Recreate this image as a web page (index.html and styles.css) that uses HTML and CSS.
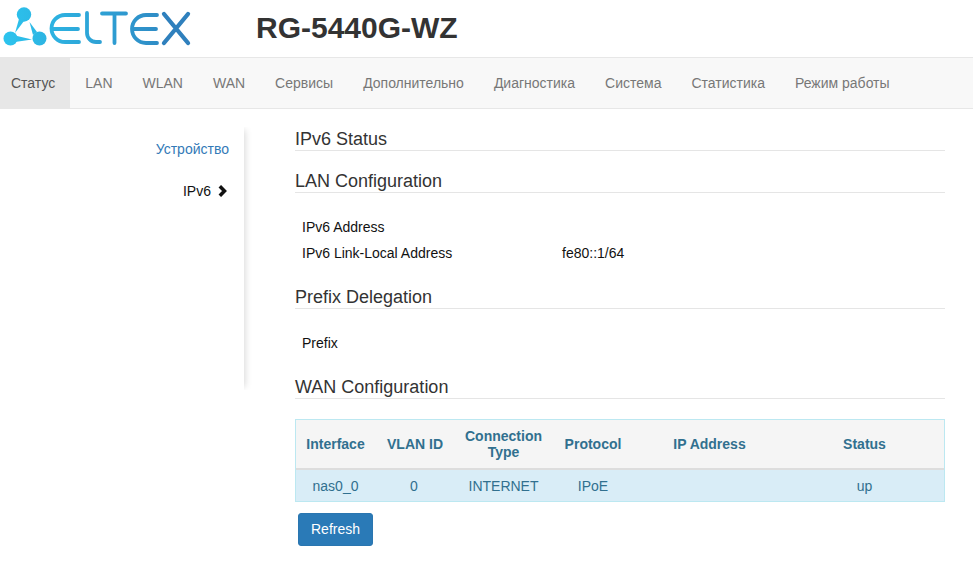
FILE: index.html
```
<!DOCTYPE html>
<html lang="ru">
<head>
<meta charset="utf-8">
<title>RG-5440G-WZ</title>
<link rel="stylesheet" href="styles.css">
</head>
<body>
<header class="top">
  <svg class="logo" width="192" height="57" viewBox="0 0 192 57" aria-label="ELTEX">
    <defs>
      <linearGradient id="g" gradientUnits="userSpaceOnUse" x1="3" y1="0" x2="192" y2="0">
        <stop offset="0" stop-color="#2cc4ee"/>
        <stop offset="1" stop-color="#2f80bd"/>
      </linearGradient>
    </defs>
    <g fill="url(#g)">
      <circle cx="24" cy="14.500" r="7.200"/>
      <circle cx="10.500" cy="38.500" r="7"/>
      <circle cx="39.500" cy="38.500" r="7"/>
      <path d="M19 19 L24 21 L15 33 Z"/>
      <path d="M29.500 22 L37 32 L33 35 Z"/>
      <path d="M15 35.500 L15 42 L32 39.500 Z"/>
    </g>
    <g fill="none" stroke="url(#g)" stroke-width="3.800" stroke-linecap="round" stroke-linejoin="round">
      <path d="M79 15 H65 A13.500 13.500 0 0 0 65 42 H79 M52 29 H78"/>
      <path d="M87 13 V33 A9 9 0 0 0 96 42 H100"/>
      <path d="M102 13.500 H126 M114.500 14 V43"/>
      <path d="M157 15 H146 A14 14 0 0 0 146 43 H157 M133 29 H156"/>
    </g>
    <path d="M164 14 L188 43 M188 14 L164 43" fill="none" stroke="#2f80bd" stroke-width="4.300" stroke-linecap="round"/>
  </svg>
  <h1 class="model">RG-5440G-WZ</h1>
</header>
<nav class="menu">
  <a class="tab active" href="#">Статус</a>
  <a class="tab" href="#">LAN</a>
  <a class="tab" href="#">WLAN</a>
  <a class="tab" href="#">WAN</a>
  <a class="tab" href="#">Сервисы</a>
  <a class="tab" href="#">Дополнительно</a>
  <a class="tab" href="#">Диагностика</a>
  <a class="tab" href="#">Система</a>
  <a class="tab" href="#">Статистика</a>
  <a class="tab" href="#">Режим работы</a>
</nav>
<div class="page">
  <aside class="side">
    <a class="side-link" href="#">Устройство</a>
    <a class="side-link current" href="#">IPv6
      <svg class="chev" width="9" height="12" viewBox="0 0 9 12"><path d="M1.800 1.200 L6.500 6 L1.800 10.800" fill="none" stroke="#111" stroke-width="3.500"/></svg>
    </a>
  </aside>
  <main class="content">
    <h2 class="title first">IPv6 Status</h2>
    <h2 class="title">LAN Configuration</h2>
    <div class="rows">
      <div class="row"><span class="key">IPv6 Address</span></div>
      <div class="row"><span class="key">IPv6 Link-Local Address</span><span>fe80::1/64</span></div>
    </div>
    <h2 class="title">Prefix Delegation</h2>
    <div class="rows">
      <div class="row"><span class="key">Prefix</span></div>
    </div>
    <h2 class="title">WAN Configuration</h2>
    <table class="wan">
      <thead>
        <tr>
          <th class="c1">Interface</th>
          <th class="c2">VLAN ID</th>
          <th class="c3">Connection Type</th>
          <th class="c4">Protocol</th>
          <th class="c5">IP Address</th>
          <th>Status</th>
        </tr>
      </thead>
      <tbody>
        <tr>
          <td>nas0_0</td>
          <td>0</td>
          <td>INTERNET</td>
          <td>IPoE</td>
          <td></td>
          <td>up</td>
        </tr>
      </tbody>
    </table>
    <button class="refresh" type="button">Refresh</button>
  </main>
</div>
</body>
</html>
```
FILE: styles.css
```
* { box-sizing: border-box; }
html, body { margin: 0; padding: 0; }
body {
  background: #fff;
  color: #333;
  font-family: "Liberation Sans", Arial, sans-serif;
  font-size: 14px;
  line-height: 20px;
  overflow: hidden;
}
.top {
  display: flex;
  align-items: center;
  height: 57px;
}
.logo { flex: none; width: 192px; height: 57px; }
.model {
  margin: 0 0 3px 64px;
  font-size: 30px;
  line-height: 33px;
  font-weight: 700;
  color: #333;
}
.menu {
  display: flex;
  height: 52px;
  background: #f8f8f8;
  border-top: 1px solid #e7e7e7;
  border-bottom: 1px solid #e7e7e7;
  overflow: hidden;
}
.tab {
  display: block;
  height: 50px;
  padding: 15px;
  color: #777;
  text-decoration: none;
}
.tab:first-child { padding-left: 11px; }
.tab.active { background: #e7e7e7; color: #555; }
.page {
  display: flex;
  align-items: flex-start;
}
.side {
  flex: none;
  width: 244px;
  height: 263px;
  margin-top: 18px;
  padding: 12px 15px 0 0;
  display: flex;
  flex-direction: column;
  align-items: flex-end;
  gap: 22px;
  box-shadow: 4px 0 7px -3px rgba(0, 0, 0, 0.16);
  clip-path: inset(0 -12px 0 0);
}
.side-link { color: #337ab7; text-decoration: none; display: flex; align-items: center; gap: 7px; }
.side-link.current { color: #111; padding-right: 2px; }
.chev { flex: none; }
.content {
  flex: none;
  width: 650px;
  margin-left: 51px;
  padding-top: 19px;
}
.title {
  margin: 0;
  font-size: 18px;
  font-weight: 400;
  line-height: 22px;
  color: #333;
  border-bottom: 1px solid #e5e5e5;
}
.title.first { margin-bottom: 19px; }
.rows { padding: 21px 7px 0; color: #111; margin-bottom: 20px; }
.row { display: flex; height: 26px; align-items: center; }
.key { width: 260px; }
.wan {
  width: 650px;
  margin-top: 20px;
  border-collapse: separate;
  border-spacing: 0;
  table-layout: fixed;
  text-align: center;
  color: #31708f;
  border: 1px solid #bce8f1;
}
.wan th {
  height: 50px;
  padding: 0 3px 0 0;
  line-height: 16px;
  font-weight: 700;
  background: #f5f5f5;
  border-bottom: 2px solid #ddd;
}
.wan td {
  height: 31px;
  padding: 0 3px 0 0;
  background: #d9edf7;
}
.wan th.c1, .wan th.c2, .wan td:first-child { padding-right: 1px; }
.c1 { width: 80px; }
.c2 { width: 79px; }
.c3 { width: 100px; }
.c4 { width: 79px; }
.c5 { width: 154px; }
.refresh {
  display: block;
  margin: 11px 0 0 3px;
  width: 75px;
  height: 33px;
  padding: 0 0 2px;
  font: inherit;
  color: #fff;
  background-color: #2a7ab7;
  border: 1px solid #2a76b0;
  border-radius: 3px;
}
```
